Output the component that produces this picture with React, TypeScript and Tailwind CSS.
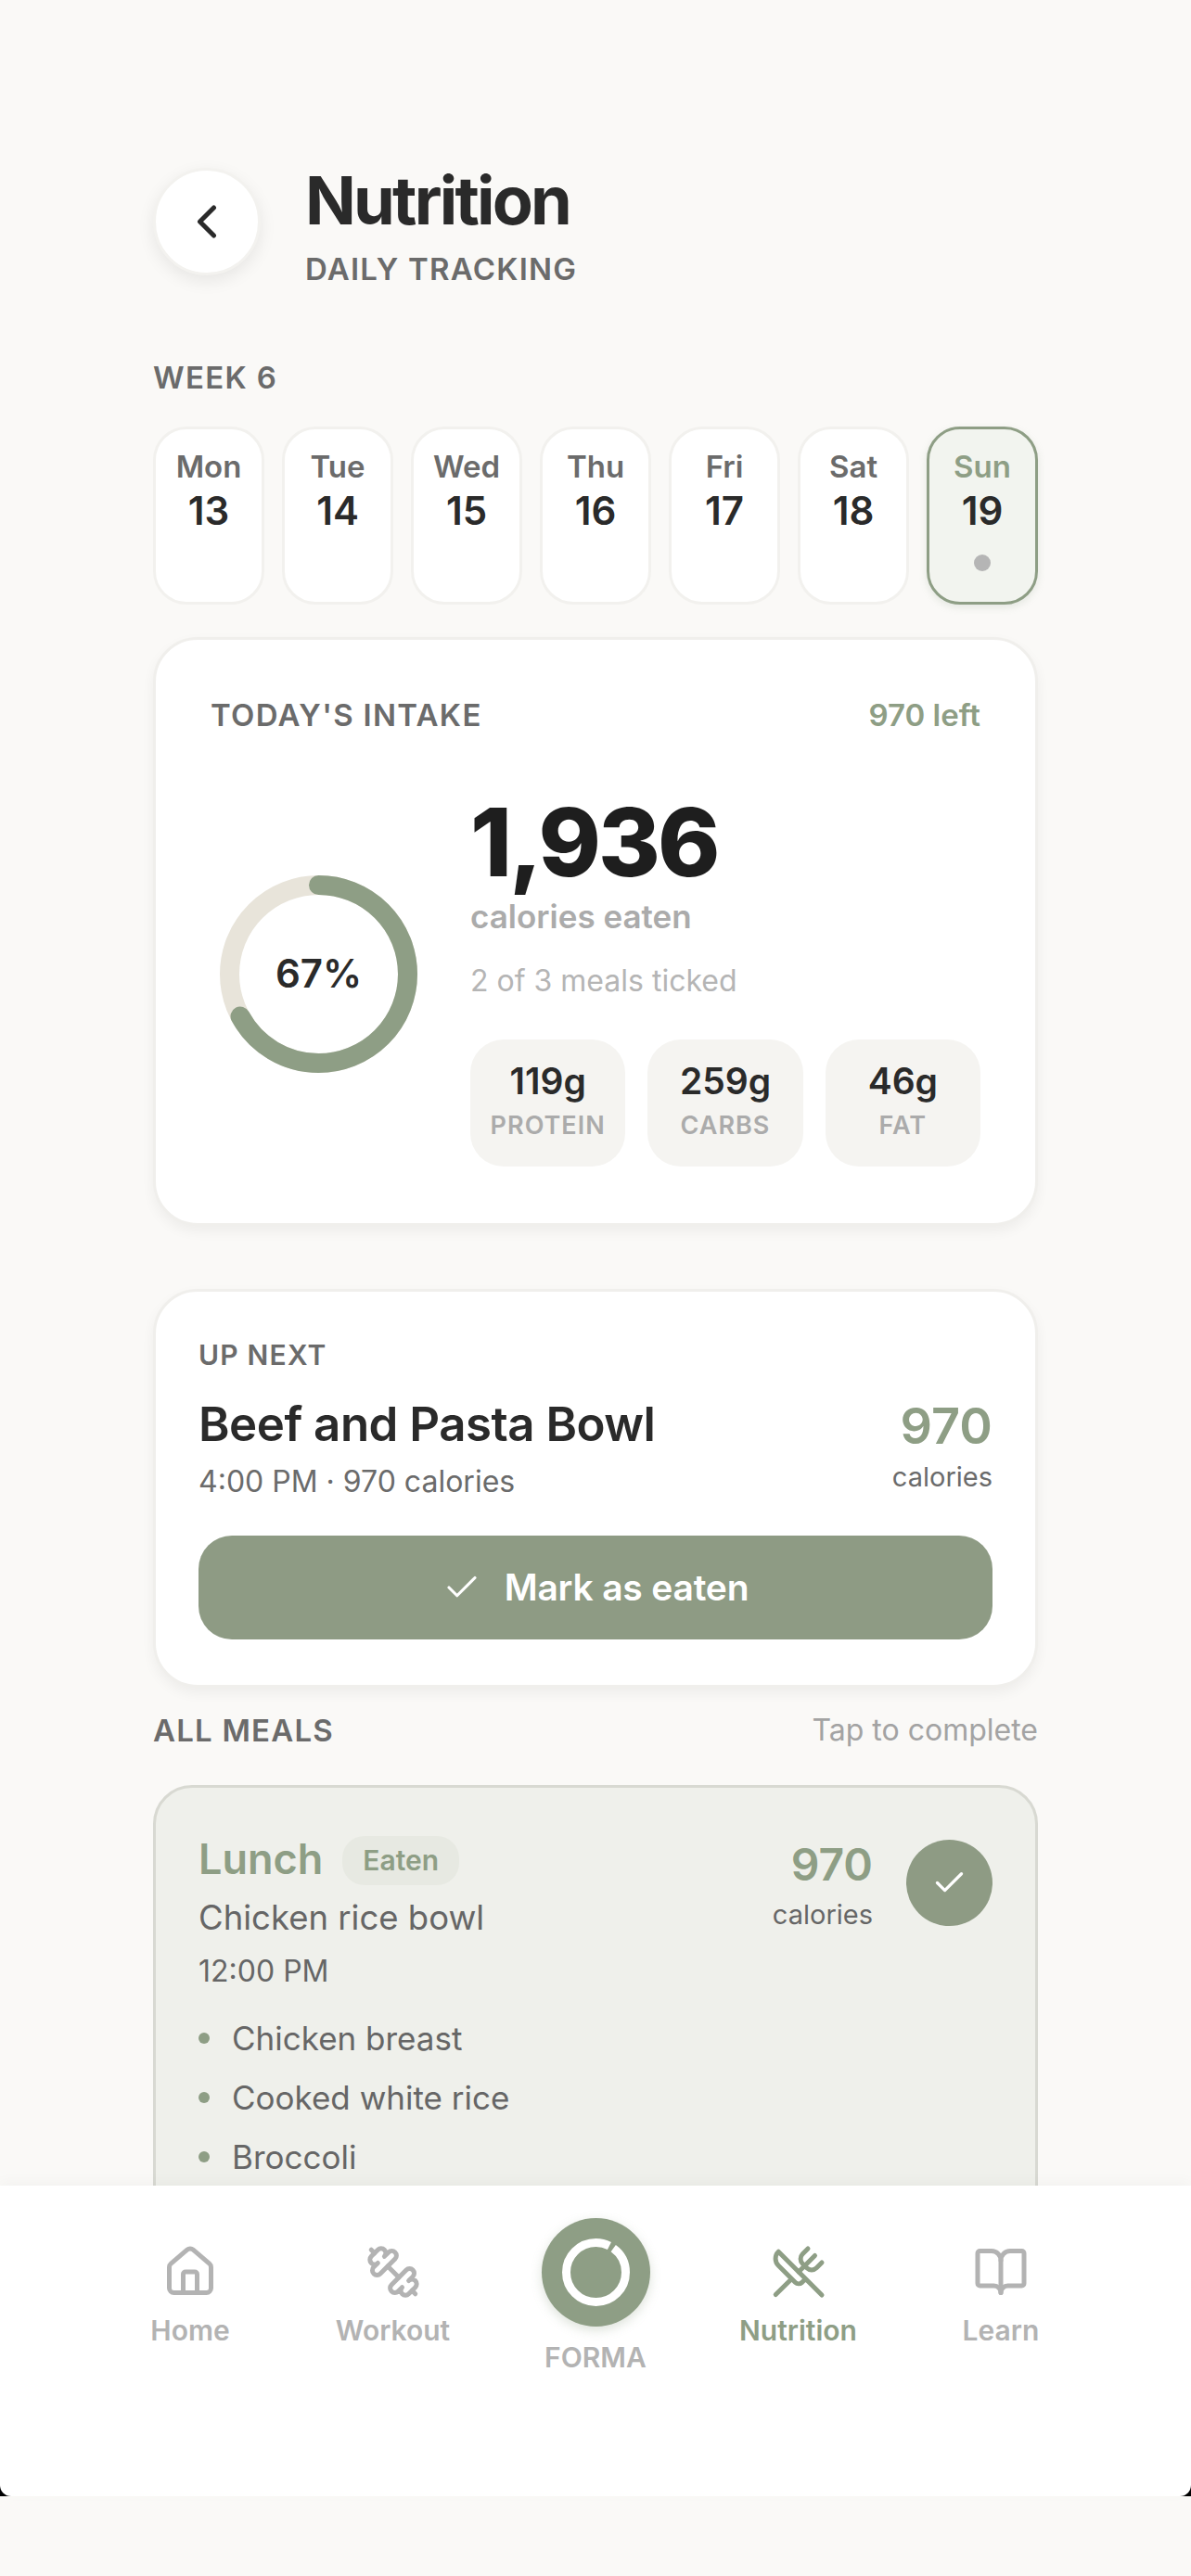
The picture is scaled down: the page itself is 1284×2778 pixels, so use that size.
import { Check, ChevronLeft, House, Dumbbell, UtensilsCrossed, BookOpen } from "lucide-react";

const days = [
  ["Mon", "13"], ["Tue", "14"], ["Wed", "15"], ["Thu", "16"], ["Fri", "17"], ["Sat", "18"],
];

function Ring() {
  const r = 96;
  const c = 2 * Math.PI * r;
  return (
    <div className="relative w-[213px] h-[213px] shrink-0">
      <svg width="213" height="213" viewBox="0 0 213 213" className="block -rotate-90">
        <circle cx="106.5" cy="106.5" r={r} fill="none" stroke="#e8e4da" strokeWidth="21" />
        <circle cx="106.5" cy="106.5" r={r} fill="none" stroke="#8e9e85" strokeWidth="21" strokeLinecap="round" strokeDasharray={`${c * 0.67} ${c}`} />
      </svg>
      <div className="absolute inset-0 flex items-center justify-center pb-[2px] text-[42px] font-semibold text-[#2a2a2a]">67%</div>
    </div>
  );
}

function Macro({ value, label }: { value: string; label: string }) {
  return (
    <div className="flex-1 h-[137px] rounded-[36px] bg-[#f5f4f1] flex flex-col items-center pt-[20px]">
      <div className="text-[39px] leading-[50px] font-semibold text-[#2a2a2a]">{value}</div>
      <div className="mt-[5px] text-[27px] leading-[36px] font-semibold tracking-[1px] text-[#ababab]">{label}</div>
    </div>
  );
}

function NavItem({ icon, label, active }: { icon: React.ReactNode; label: string; active?: boolean }) {
  return (
    <div className={`w-[218.5px] flex flex-col items-center pt-[63px] ${active ? "text-[#8e9e85]" : "text-[#b3b3b3]"}`}>
      {icon}
      <div className="text-[30px] leading-[40px] font-semibold mt-[13px]">{label}</div>
    </div>
  );
}

export default function App() {
  return (
    <div className="relative w-[1284px] h-[2778px] overflow-hidden bg-[#faf9f7] font-['Inter',sans-serif] text-[#2a2a2a]">
      <main className="px-[165px] pt-[181px]">
        <header className="flex items-start gap-[48px]">
          <div className="w-[116px] h-[116px] rounded-full bg-white border-[3px] border-[#f3f2ef] shadow-[0_6px_18px_rgba(0,0,0,0.08)] flex items-center justify-center">
            <ChevronLeft size={60} strokeWidth={2} className="text-[#2a2a2a] -ml-[1px]" />
          </div>
          <div className="pt-[1px]">
            <h1 className="text-[72px] leading-[68px] font-bold tracking-[-2.8px] text-[#2a2a2a]">Nutrition</h1>
            <p className="mt-[20px] text-[33px] leading-[40px] font-semibold tracking-[1.2px] text-[#6b6b6b]">DAILY TRACKING</p>
          </div>
        </header>

        <h2 className="mt-[77px] text-[33px] leading-[40px] font-semibold tracking-[1.3px] text-[#6b6b6b]">WEEK 6</h2>

        <div className="mt-[33px] flex justify-between">
          {days.map(([d, n]) => (
            <div key={d} className="w-[120px] h-[192px] rounded-[36px] bg-white border-[3px] border-[#f2f1ee] flex flex-col items-center pt-[19px]">
              <div className="text-[33px] leading-[42px] font-semibold text-[#6b6b6b]">{d}</div>
              <div className="text-[42px] leading-[54px] font-semibold text-[#2a2a2a]">{n}</div>
            </div>
          ))}
          <div className="w-[120px] h-[192px] rounded-[36px] bg-[#f2f4ef] border-[3px] border-[#8e9e85] flex flex-col items-center pt-[19px] shadow-[0_3px_8px_rgba(142,158,133,0.2)]">
            <div className="text-[33px] leading-[42px] font-semibold text-[#8e9e85]">Sun</div>
            <div className="text-[42px] leading-[54px] font-semibold text-[#2a2a2a]">19</div>
            <div className="mt-[20px] w-[18px] h-[18px] rounded-full bg-[#b5b5b5]" />
          </div>
        </div>

        <section className="mt-[35px] h-[635px] rounded-[48px] bg-white border-[3px] border-[#f0efec] shadow-[0_6px_14px_rgba(0,0,0,0.05)] px-[59px] pt-[61px]">
          <div className="flex justify-between items-center">
            <div className="text-[33px] leading-[40px] font-semibold tracking-[1.3px] text-[#6b6b6b]">TODAY'S INTAKE</div>
            <div className="text-[33px] leading-[40px] font-semibold text-[#8e9e85]">970 left</div>
          </div>
          <div className="mt-[61px] flex items-center gap-[57px]">
            <div className="ml-[10px] mb-[9px]"><Ring /></div>
            <div className="flex-1">
              <div className="text-[102px] leading-[112px] font-extrabold tracking-[-3px] text-[#1e1e1e]">1,936</div>
              <div className="text-[35px] leading-[44px] font-semibold text-[#ababab] mt-[2px]">calories eaten</div>
              <div className="mt-[26px] text-[32px] leading-[44px] text-[#b5b5b5]">2 of 3 meals ticked</div>
              <div className="mt-[41px] flex gap-[24px]">
                <Macro value="119g" label="PROTEIN" />
                <Macro value="259g" label="CARBS" />
                <Macro value="46g" label="FAT" />
              </div>
            </div>
          </div>
        </section>

        <section className="mt-[68px] h-[430px] rounded-[48px] bg-white border-[3px] border-[#f0efec] shadow-[0_6px_14px_rgba(0,0,0,0.05)] px-[46px] pt-[50px]">
          <div className="text-[30px] leading-[36px] font-semibold tracking-[1.2px] text-[#6b6b6b]">UP NEXT</div>
          <div className="mt-[25px] flex justify-between items-start">
            <div>
              <div className="text-[51px] leading-[64px] font-semibold tracking-[-0.5px] text-[#2a2a2a]">Beef and Pasta Bowl</div>
              <div className="mt-[8px] text-[32px] leading-[44px] text-[#6b6b6b]">4:00 PM · 970 calories</div>
            </div>
            <div className="text-right pt-[2px]">
              <div className="text-[54px] leading-[64px] font-semibold text-[#8e9e85]">970</div>
              <div className="mt-[3px] text-[29px] leading-[40px] text-[#6b6b6b]">calories</div>
            </div>
          </div>
          <div className="mt-[36px] h-[112px] rounded-[36px] bg-[#8e9b84] flex items-center justify-center gap-[25px] text-white">
            <Check size={42} strokeWidth={1.8} />
            <span className="text-[39px] font-semibold tracking-[-0.2px]">Mark as eaten</span>
          </div>
        </section>

        <div className="mt-[26px] flex justify-between items-center">
          <div className="text-[33px] leading-[40px] font-semibold tracking-[1.2px] text-[#6b6b6b]">ALL MEALS</div>
          <div className="text-[32px] leading-[40px] text-[#a3a3a3]">Tap to complete</div>
        </div>

        <section className="mt-[39px] h-[560px] rounded-[42px] bg-[#eff0eb] border-[3px] border-[#d8d9d2] px-[46px] pt-[47px]">
          <div className="flex justify-between items-start">
            <div>
              <div className="flex items-center gap-[21px] h-[60px]">
                <span className="text-[45px] font-semibold text-[#8e9e85]">Lunch</span>
                <span className="mt-[2px] h-[53px] px-[22px] rounded-[24px] bg-[#e7e9e2] flex items-center text-[30px] font-semibold text-[#8e9e85]">Eaten</span>
              </div>
              <div className="mt-[8px] text-[36.5px] leading-[50px] text-[#666]">Chicken rice bowl</div>
              <div className="mt-[11px] text-[32px] leading-[44px] text-[#666]">12:00 PM</div>
            </div>
            <div className="flex items-start gap-[36px] mt-[6px]">
              <div className="text-right">
                <div className="text-[48px] leading-[60px] font-semibold text-[#8e9e85]">970</div>
                <div className="text-[29px] leading-[40px] text-[#666] mt-[4px]">calories</div>
              </div>
              <div className="mt-[3px] w-[93px] h-[93px] rounded-full bg-[#8e9b84] flex items-center justify-center text-white">
                <Check size={39} strokeWidth={2} />
              </div>
            </div>
          </div>
          <ul className="mt-[26px] flex flex-col gap-[16px]">
            {["Chicken breast", "Cooked white rice", "Broccoli"].map((t) => (
              <li key={t} className="flex items-center gap-[24px] text-[35px] leading-[48px] text-[#666]">
                <span className="w-[12px] h-[12px] rounded-full bg-[#8e9e85]" />
                {t}
              </li>
            ))}
          </ul>
        </section>
      </main>

      <div className="absolute left-0 top-[2357px] w-[1284px] h-[335px] bg-black shadow-[0_-4px_14px_rgba(0,0,0,0.03)]">
        <nav className="h-full bg-white rounded-b-[12px] flex justify-center">
          <NavItem label="Home" icon={<House size={60} strokeWidth={2} />} />
          <NavItem label="Workout" icon={<Dumbbell size={60} strokeWidth={2} className="-scale-x-100" />} />
          <div className="w-[218.5px] flex flex-col items-center pt-[35px] text-[#b3b3b3]">
            <div className="w-[117px] h-[117px] rounded-full bg-[#8e9e85] shadow-[0_4px_12px_rgba(142,158,133,0.3)] flex items-center justify-center">
              <svg width="73" height="73" viewBox="0 0 73 73" className="-rotate-90">
                <circle cx="36.5" cy="36.5" r="32" fill="none" stroke="#fff" strokeWidth="9" strokeDasharray="196 5" strokeDashoffset="-20" />
              </svg>
            </div>
            <div className="text-[30px] leading-[40px] font-semibold mt-[13px]">FORMA</div>
          </div>
          <NavItem label="Nutrition" active icon={<UtensilsCrossed size={60} strokeWidth={2} />} />
          <NavItem label="Learn" icon={<BookOpen size={60} strokeWidth={2} />} />
        </nav>
      </div>
    </div>
  );
}
